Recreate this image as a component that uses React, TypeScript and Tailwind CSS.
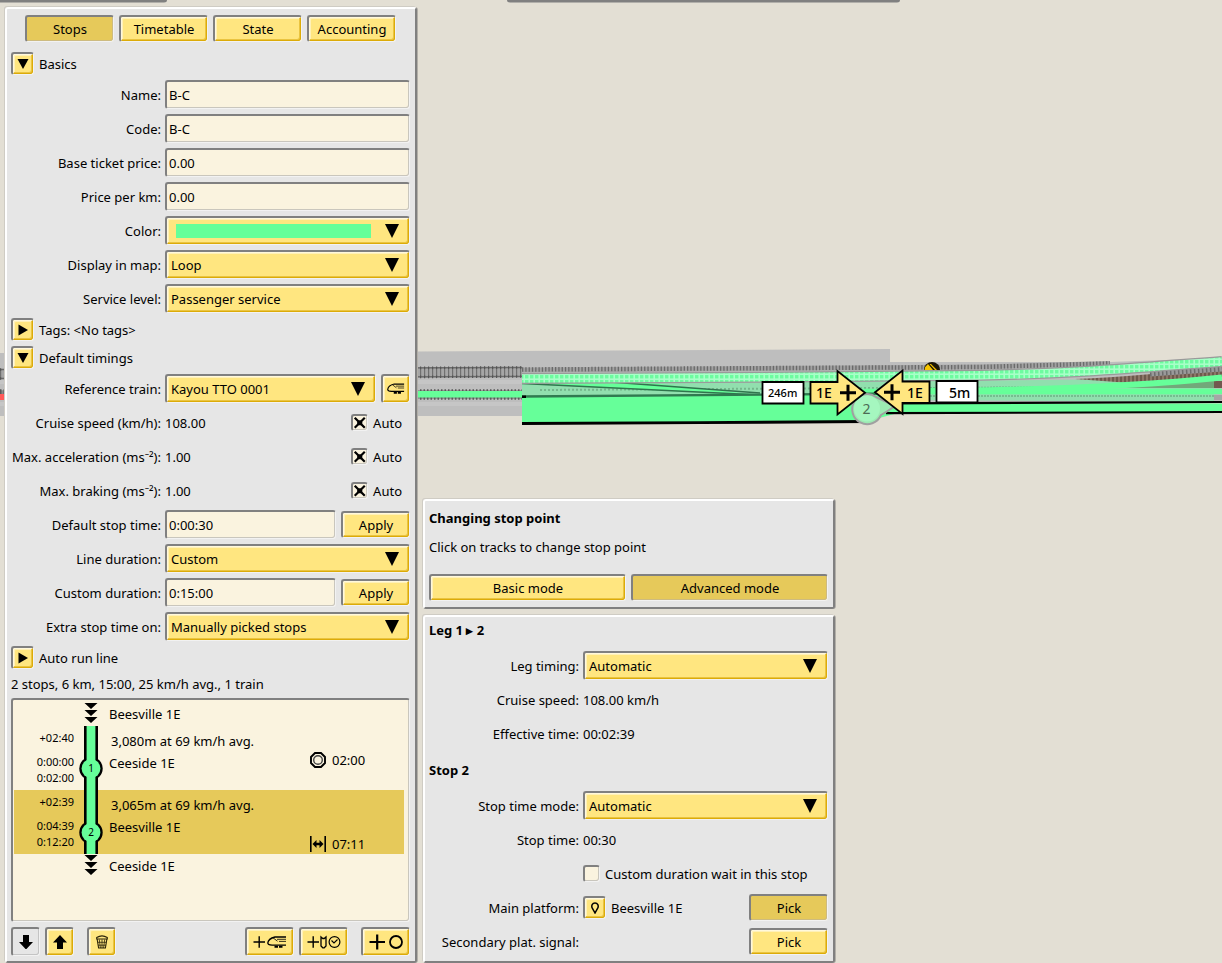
import type { ReactNode } from "react";
import { clsx } from "clsx";

const bevel =
  "rounded-[3px] border-t-2 border-l-2 border-r border-b border-t-[#808080] border-l-[#808080] border-r-[#f2f2f2] border-b-[#f2f2f2]";
const raised =
  "bg-[#ffe680] shadow-[inset_-1px_-1px_0_#dcab08,inset_1px_1px_0_#fff8dc,inset_-2px_-2px_0_#eac440,inset_2px_2px_0_#fff1b8]";
const pressed = "bg-[#e6c95a] shadow-[inset_-1px_-1px_0_#cdbb80]";
const field = "bg-[#faf3df] shadow-[inset_-1px_-1px_0_#c9c6bd]";
const panel =
  "rounded-[3px] border-2 border-t-white border-l-white border-r-[#808080] border-b-[#808080] bg-[#e6e6e6] px-1 pt-1 pr-[5px] pb-[5px] shadow-[-1px_-1px_0_#cfccc4,1px_0_0_#b2afa8]";

function Button({
  children,
  className,
  active,
  disabled,
  label,
}: {
  children: ReactNode;
  className?: string;
  active?: boolean;
  disabled?: boolean;
  label?: string;
}) {
  return (
    <button
      type="button"
      aria-label={label}
      aria-pressed={active}
      disabled={disabled}
      className={clsx(
        "flex shrink-0 items-center justify-center",
        bevel,
        disabled ? "bg-[#e6e6e6] shadow-[inset_-1px_-1px_0_#c4c4c4]" : active ? pressed : raised,
        className,
      )}
    >
      {children}
    </button>
  );
}

function DownArrow() {
  return (
    <svg viewBox="0 0 14 14" className="pointer-events-none h-3.5 w-3.5" aria-hidden="true">
      <path d="M0 0H14L7 14Z" />
    </svg>
  );
}

function Row({ id, label, children }: { id?: string; label?: string; children: ReactNode }) {
  return (
    <div className="grid min-h-[29px] grid-cols-[150px_1fr] items-center gap-1">
      {label && id ? (
        <label htmlFor={id} className="pt-0.5 text-right whitespace-nowrap">
          {label}
        </label>
      ) : (
        <span className="pt-0.5 text-right whitespace-nowrap">{label}</span>
      )}
      <div className="flex min-w-0 items-center gap-[5px]">{children}</div>
    </div>
  );
}

function Value({ children }: { children: ReactNode }) {
  return <span className="flex-1 pt-0.5">{children}</span>;
}

function Select({ id, value }: { id: string; value: string }) {
  return (
    <div className="relative min-w-0 flex-1">
      <select id={id} className={clsx("block h-[29px] w-full appearance-none pr-8 pl-1", bevel, raised)}>
        <option>{value}</option>
      </select>
      <div className="pointer-events-none absolute inset-y-0 right-[11px] flex items-center">
        <DownArrow />
      </div>
    </div>
  );
}

function TextField({ id, value }: { id: string; value: string }) {
  return (
    <input id={id} type="text" defaultValue={value} className={clsx("h-[29px] min-w-0 flex-1 pl-0.5", bevel, field)} />
  );
}

function CheckBox({ id, label, checked }: { id: string; label: string; checked?: boolean }) {
  return (
    <div className="flex items-center gap-[5px]">
      <div className="relative h-[17px] w-[17px]">
        <input
          id={id}
          type="checkbox"
          defaultChecked={checked}
          className={clsx("peer block h-[17px] w-[17px] appearance-none", bevel, field)}
        />
        <svg
          viewBox="0 0 17 17"
          className="pointer-events-none absolute inset-0 hidden peer-checked:block"
          aria-hidden="true"
        >
          <path d="M4.5 4.5L13 13M13 4.5L4.5 13" stroke="#000" strokeWidth="2.2" strokeLinecap="square" />
          <circle cx="8.75" cy="8.75" r="2.6" />
        </svg>
      </div>
      <label htmlFor={id} className="pt-0.5">
        {label}
      </label>
    </div>
  );
}

function Section({ title, open }: { title: string; open?: boolean }) {
  return (
    <div className="flex items-center gap-[5px]">
      <Button label={title} className="h-[23px] w-[23px]">
        <svg viewBox="0 0 12 12" className="h-3 w-3" aria-hidden="true">
          <path d={open ? "M0.5 1H11.5L6 11Z" : "M1.5 0.5V11.5L11 6Z"} />
        </svg>
      </Button>
      <h2 className="pt-0.5">{title}</h2>
    </div>
  );
}

function TrainShape() {
  return (
    <g fill="none" stroke="#000">
      <path d="M19 1H8C4 2 1 4.5 0.8 7C0.8 8.6 2.5 9 5 9.2H19" strokeWidth="1.3" />
      <path d="M6 1.8L10.5 5.2M10 3.3H19M12 5.4H19" strokeWidth="0.8" />
      <path d="M7.5 10.8H16.5" strokeWidth="2" strokeDasharray="3.5 1" />
    </g>
  );
}

function Chevrons() {
  return (
    <svg viewBox="0 0 34 24" className="h-6 w-[34px]" aria-hidden="true">
      <path d="M10.5 1H23.5L17 7ZM10.5 8H23.5L17 14ZM10.5 15H23.5L17 21Z" />
    </svg>
  );
}

function Stop({
  n,
  times,
  leg,
  name,
  wait,
  icon,
  selected,
}: {
  n: number;
  times: string[];
  leg: string;
  name: string;
  wait: string;
  icon: ReactNode;
  selected?: boolean;
}) {
  return (
    <li className={clsx("grid h-16 grid-cols-[60px_35px_1fr_94px]", selected && "bg-[#e6c95a]")}>
      <div className="flex flex-col pt-1 text-right text-[11px] leading-4">
        <span className="mb-2">{times[0]}</span>
        <span>{times[1]}</span>
        <span>{times[2]}</span>
      </div>
      <svg viewBox="0 0 34 64" className="h-16 w-[34px]" aria-hidden="true">
        <path d="M10 0H24V64H10Z" />
        <circle cx="17" cy="42.5" r="11.7" />
        <path d="M12.6 0H21.4V64H12.6Z" fill="#66ff99" />
        <circle cx="17" cy="42.5" r="9.4" fill="#66ff99" />
        <text x="17" y="46" textAnchor="middle" fontSize="10">
          {n}
        </text>
      </svg>
      <div className="flex flex-col pt-1 leading-[22px]">
        <span className="pl-0.5">{leg}</span>
        <span>{name}</span>
      </div>
      <div className={clsx("flex items-center gap-1.5", selected ? "mt-11 h-5" : "mt-6 h-5")}>
        {icon}
        <span>{wait}</span>
      </div>
    </li>
  );
}

function RailMap() {
  return (
    <svg className="absolute inset-0 h-full w-full" aria-label="Track map">
      <defs>
        <pattern id="dots" width="5" height="5" patternUnits="userSpaceOnUse">
          <rect width="5" height="5" fill="#a8ffc8" />
          <rect width="3.4" height="3.4" fill="#6dfc9f" />
        </pattern>
        <pattern id="brown" width="4" height="12" patternUnits="userSpaceOnUse">
          <rect width="4" height="12" fill="#8d7768" />
          <rect width="2" height="12" fill="#6d594c" />
        </pattern>
      </defs>
      <path d="M0 -6H167V0Q167 2.5 164 2.5H0Z" fill="#808080" />
      <path d="M507 -6H900V0Q900 2.5 897 2.5H510Q507 2.5 507 0Z" fill="#808080" />

      <path d="M0 353L418 351.5L890 349V362L1110 362L1222 358V402L522 410V416H0Z" fill="#bebebe" />
      <path d="M0 382H522M0 404H522" stroke="#c6c6c6" strokeWidth="4" fill="none" />

      <path d="M0 374L522 372" stroke="#a6a6a6" strokeWidth="9" fill="none" />
      <path d="M0 374L522 372" stroke="#707070" strokeWidth="9" strokeDasharray="1.2 2.8" fill="none" />
      <path d="M0 369.5L522 367.5M0 378.5L522 376.5" stroke="#6a6a6a" strokeWidth="1.5" fill="none" />
      <path d="M0 369.5L522 367.5M0 378.5L522 376.5" stroke="#555" strokeWidth="2.6" strokeDasharray="1.2 2.8" fill="none" />
      <path d="M522 370L980 367L1110 363.5" stroke="#a2a2a2" strokeWidth="5" fill="none" />
      <path d="M522 369.5L980 367L1110 363.5" stroke="#6a6a6a" strokeWidth="4.5" strokeDasharray="1.3 2" fill="none" />

      <path d="M0 394.5H522" stroke="#8a8a8a" strokeWidth="8.6" fill="none" />
      <path d="M0 394.5H522" stroke="#5a5a5a" strokeWidth="10.5" strokeDasharray="1.5 2" fill="none" />
      <path d="M418 394.2H522" stroke="#66ff99" strokeWidth="6.4" fill="none" />
      <path d="M0 397H6" stroke="#ff5a5a" strokeWidth="6" fill="none" />

      <path d="M522 384L1040 380L1214 378V402L522 398Z" fill="#91dfae" />
      <path d="M540 390L880 388" stroke="#74b78c" strokeWidth="2" strokeDasharray="2 2" fill="none" />
      <path d="M900 388L1214 386M900 396H1214" stroke="#6fb187" strokeWidth="1.6" strokeDasharray="2 1" fill="none" />
      <path d="M1075 379C1120 377 1170 373 1222 367V378L1130 383Z" fill="url(#brown)" />
      <path d="M1150 374L1222 369" stroke="#9a9a9a" strokeWidth="5" fill="none" />
      <path d="M1150 374L1222 369" stroke="#6c6c6c" strokeWidth="5" strokeDasharray="1.5 2.5" fill="none" />
      <path d="M1214 381H1222V388H1214Z" fill="#72594f" />
      <path d="M1214 395H1222V400H1214Z" fill="#a6a6a6" />
      <path d="M1150 385L1214 380V388H1120Z" fill="#72a87a" />

      <path d="M525 383L640 382L760 395H740Z" fill="#66ff99" />
      <path d="M522 383.5L760 395" stroke="#30744d" strokeWidth="1.4" fill="none" />
      <path d="M610 382L760 393" stroke="#30744d" strokeWidth="1.6" fill="none" />
      <path d="M860 391.5H1222" stroke="#66ff99" strokeWidth="5.5" fill="none" />
      <path d="M900 391C1020 391 1120 388 1222 377.5" stroke="#66ff99" strokeWidth="6" fill="none" />

      <path
        d="M522 378.5L760 377.2L980 375.2C1080 373.5 1140 367.5 1222 361.5"
        stroke="#9a9a9a"
        strokeWidth="11"
        fill="none"
      />
      <path
        d="M522 378.5L760 377.2L980 375.2C1080 373.5 1140 367.5 1222 361.5"
        stroke="url(#dots)"
        strokeWidth="8.6"
        fill="none"
      />

      <path d="M522 396.5L900 394V412.5L866 421.5L522 423.5Z" fill="#66ff99" />
      <path d="M522 396.5L900 393.5" stroke="#307a50" strokeWidth="2.4" fill="none" />
      <path d="M522 395.5H526V398H522Z" />
      <path d="M522 423.5L700 422.7L868 421.5" stroke="#000" strokeWidth="2.8" fill="none" />
      <path d="M868 403.5H1222V412.5L868 413.5Z" fill="#66ff99" />
      <path d="M890 403.3L1222 402" stroke="#000" strokeWidth="2.2" fill="none" />
      <path d="M886 413.2L1222 412" stroke="#000" strokeWidth="2.2" fill="none" />

      <path d="M924 370A8 8 0 0 1 940 370Z" fill="#1c1608" />
      <path d="M924.5 370Q925 366 928 364L933 370ZM931 364L937 370H935L929.5 364Z" fill="#f6c400" />

      <path
        d="M876 397L895 406Q888 411 881 415A15 15 0 1 1 876 397Z"
        fill="#9ceab2"
        stroke="#a0a0a0"
        strokeWidth="2"
      />
      <circle cx="867" cy="408.5" r="13" fill="#a5f7bf" />
      <text x="866.5" y="414" textAnchor="middle" fontSize="14" fill="#4c6b55">
        2
      </text>

      <g fill="#ffe680" stroke="#000" strokeWidth="1.8">
        <path d="M810.5 382H837.5V371L865 392.8L837.5 414.5V403.5H810.5Z" />
        <path d="M929.5 381.5H902.5V370.5L875 392.3L902.5 414V403H929.5Z" />
      </g>
      <path d="M840 392.8H856M848 384.8V400.8M884 392.3H900M892 384.3V400.3" stroke="#000" strokeWidth="3" />
      <path d="M762.5 382H803.5V403.5H762.5Z" fill="#fff" stroke="#000" strokeWidth="1.8" />
      <path d="M936.5 381H977.5V402.5H936.5Z" fill="#fff" stroke="#000" strokeWidth="1.8" />
      <g fontSize="14" fontWeight="500">
        <text x="816" y="398">1E</text>
        <text x="907" y="398">1E</text>
        <text x="949" y="398">5m</text>
      </g>
      <text x="768" y="397" fontSize="11" fontWeight="500">
        246m
      </text>
    </svg>
  );
}

function LinePanel() {
  return (
    <section className={clsx("flex w-[412px] shrink-0 flex-col gap-[5px]", panel)} aria-label="Line">
      <nav className="mt-0.5 mb-[5px] flex justify-center gap-[5px]">
        <Button active className="h-[27px] w-[89px]">
          Stops
        </Button>
        <Button className="h-[27px] w-[89px]">Timetable</Button>
        <Button className="h-[27px] w-[89px]">State</Button>
        <Button className="h-[27px] w-[89px]">Accounting</Button>
      </nav>

      <Section title="Basics" open />
      <Row id="name" label="Name:">
        <TextField id="name" value="B-C" />
      </Row>
      <Row id="code" label="Code:">
        <TextField id="code" value="B-C" />
      </Row>
      <Row id="base" label="Base ticket price:">
        <TextField id="base" value="0.00" />
      </Row>
      <Row id="perkm" label="Price per km:">
        <TextField id="perkm" value="0.00" />
      </Row>
      <Row id="color" label="Color:">
        <button
          id="color"
          type="button"
          className={clsx("flex h-[29px] flex-1 items-center justify-between gap-3.5 pr-2.5 pl-[9px]", bevel, raised)}
        >
          <span className="h-3.5 flex-1 bg-[#66ff99]" />
          <DownArrow />
        </button>
      </Row>
      <Row id="display" label="Display in map:">
        <Select id="display" value="Loop" />
      </Row>
      <Row id="service" label="Service level:">
        <Select id="service" value="Passenger service" />
      </Row>

      <Section title="Tags: <No tags>" />
      <Section title="Default timings" open />
      <Row id="train" label="Reference train:">
        <Select id="train" value="Kayou TTO 0001" />
        <Button label="Open train" className="h-[29px] w-[29px]">
          <svg viewBox="0 0 20 13" className="h-3 w-[18px]" aria-hidden="true">
            <TrainShape />
          </svg>
        </Button>
      </Row>
      <Row label="Cruise speed (km/h):">
        <Value>108.00</Value>
        <div className="pr-2">
          <CheckBox id="auto-speed" label="Auto" checked />
        </div>
      </Row>
      <Row label="Max. acceleration (ms⁻²):">
        <Value>1.00</Value>
        <div className="pr-2">
          <CheckBox id="auto-accel" label="Auto" checked />
        </div>
      </Row>
      <Row label="Max. braking (ms⁻²):">
        <Value>1.00</Value>
        <div className="pr-2">
          <CheckBox id="auto-brake" label="Auto" checked />
        </div>
      </Row>
      <Row id="stoptime" label="Default stop time:">
        <TextField id="stoptime" value="0:00:30" />
        <Button className="h-[27px] w-[69px]">Apply</Button>
      </Row>
      <Row id="duration" label="Line duration:">
        <Select id="duration" value="Custom" />
      </Row>
      <Row id="custom" label="Custom duration:">
        <TextField id="custom" value="0:15:00" />
        <Button className="h-[27px] w-[69px]">Apply</Button>
      </Row>
      <Row id="extra" label="Extra stop time on:">
        <Select id="extra" value="Manually picked stops" />
      </Row>

      <Section title="Auto run line" />
      <p className="h-[19px] leading-[21px]">2 stops, 6 km, 15:00, 25 km/h avg., 1 train</p>

      <ul className={clsx("min-h-[224px] flex-1 pt-0.5 pr-[5px] pl-px", bevel, field)}>
        <li className="flex h-6 items-center gap-px pl-[60px]">
          <Chevrons />
          Beesville 1E
        </li>
        <Stop
          n={1}
          times={["+02:40", "0:00:00", "0:02:00"]}
          leg="3,080m at 69 km/h avg."
          name="Ceeside 1E"
          wait="02:00"
          icon={
            <svg viewBox="0 0 16 16" className="h-4 w-4" fill="none" stroke="#000" aria-hidden="true">
              <path d="M5 1H11L15 5V11L11 15H5L1 11V5Z" strokeWidth="1.9" />
              <circle cx="8" cy="8" r="4.3" stroke="#444" strokeWidth="1.4" />
            </svg>
          }
        />
        <Stop
          n={2}
          selected
          times={["+02:39", "0:04:39", "0:12:20"]}
          leg="3,065m at 69 km/h avg."
          name="Beesville 1E"
          wait="07:11"
          icon={
            <svg viewBox="0 0 16 16" className="h-4 w-4" aria-hidden="true">
              <path d="M0 0H1.6V16H0ZM14.4 0H16V16H14.4ZM2.5 8L6.5 4V6.8H9.5V4L13.5 8L9.5 12V9.2H6.5V12Z" />
            </svg>
          }
        />
        <li className="flex h-6 items-center gap-px pl-[60px]">
          <Chevrons />
          Ceeside 1E
        </li>
      </ul>

      <div className="flex gap-[5px]">
        <Button label="Move down" disabled className="h-[29px] w-[29px]">
          <svg viewBox="0 0 14 14" className="h-3.5 w-3.5" aria-hidden="true">
            <path d="M4 0H10V7H14L7 14.5L0 7H4Z" fill="#000" />
          </svg>
        </Button>
        <Button label="Move up" className="h-[29px] w-[29px]">
          <svg viewBox="0 0 14 14" className="h-3.5 w-3.5" aria-hidden="true">
            <path d="M4 14.5H10V7.5H14L7 0L0 7.5H4Z" fill="#000" />
          </svg>
        </Button>
        <Button label="Delete" className="ml-2 h-[29px] w-[29px]">
          <svg viewBox="0 0 12 14" className="h-3.5 w-3" fill="none" stroke="#2a2208" aria-hidden="true">
            <path d="M0.7 2.5Q6 -0.8 11.3 2.5V4H0.7ZM1.2 4.5L2.6 13H9.4L10.8 4.5" strokeWidth="1.1" />
            <path d="M3.3 4.5L4.4 13M6 4.5V13M8.7 4.5L7.6 13M1.8 7.3H10.2M2.2 10.2H9.8" strokeWidth="0.8" />
          </svg>
        </Button>
        <Button label="Add train" className="ml-auto h-[29px] w-[49px]">
          <svg viewBox="0 0 34 14" className="h-3.5 w-[34px]" aria-hidden="true">
            <path d="M0.5 7H12M6.2 1.2V12.8" stroke="#000" strokeWidth="1.4" />
            <g transform="translate(14 1)">
              <TrainShape />
            </g>
          </svg>
        </Button>
        <Button label="Add signal wait" className="h-[29px] w-[49px]">
          <svg viewBox="0 0 34 14" className="h-3.5 w-[34px]" fill="none" stroke="#000" aria-hidden="true">
            <path d="M0.5 7H12M6.2 1.2V12.8" strokeWidth="1.4" />
            <path d="M14 2L15.8 3.5H17.2L19 2V11L17.2 12.8H15.8L14 11Z" strokeWidth="1.3" />
            <circle cx="27.5" cy="7" r="5.4" strokeWidth="1.2" />
            <path d="M24.5 5.5L27 8L30.5 4.5" strokeWidth="1.1" />
          </svg>
        </Button>
        <Button label="Add stop" className="ml-2 h-[29px] w-[49px]">
          <svg viewBox="0 0 34 16" className="h-4 w-[34px]" fill="none" stroke="#000" aria-hidden="true">
            <path d="M0.5 8H16M8.2 0.5V15.5" strokeWidth="2.2" />
            <circle cx="27" cy="8" r="6" strokeWidth="1.8" />
          </svg>
        </Button>
      </div>
    </section>
  );
}

function StopPointPanel() {
  return (
    <section className={clsx("flex flex-col gap-[5px]", panel)}>
      <h2 className="h-[27px] leading-[27px] font-bold">Changing stop point</h2>
      <p className="mb-3 h-5 leading-5">Click on tracks to change stop point</p>
      <div className="mb-px grid grid-cols-2 gap-[5px]">
        <Button className="h-[27px]">Basic mode</Button>
        <Button active className="h-[27px]">
          Advanced mode
        </Button>
      </div>
    </section>
  );
}

function LegPanel() {
  return (
    <section className={clsx("flex flex-col gap-[5px]", panel)}>
      <h2 className="mb-1.5 h-[19px] font-bold">Leg 1 ▸ 2</h2>
      <Row id="leg-timing" label="Leg timing:">
        <Select id="leg-timing" value="Automatic" />
      </Row>
      <Row label="Cruise speed:">
        <Value>108.00 km/h</Value>
      </Row>
      <Row label="Effective time:">
        <Value>00:02:39</Value>
      </Row>
      <h2 className="my-[7px] h-[19px] leading-[21px] font-bold">Stop 2</h2>
      <Row id="stop-mode" label="Stop time mode:">
        <Select id="stop-mode" value="Automatic" />
      </Row>
      <Row label="Stop time:">
        <Value>00:30</Value>
      </Row>
      <Row>
        <CheckBox id="custom-wait" label="Custom duration wait in this stop" />
      </Row>
      <Row label="Main platform:">
        <Button label="Show platform" className="h-[23px] w-[23px]">
          <svg viewBox="0 0 8 12" className="h-3 w-2" fill="none" stroke="#000" strokeWidth="1.5" aria-hidden="true">
            <path d="M4 11L1.3 6.2C0 3.6 1.4 1 4 1S8 3.6 6.7 6.2Z" />
          </svg>
        </Button>
        <Value>Beesville 1E</Value>
        <Button active className="h-[27px] w-[79px]">
          Pick
        </Button>
      </Row>
      <Row label="Secondary plat. signal:">
        <Button className="ml-auto h-[27px] w-[79px]">Pick</Button>
      </Row>
    </section>
  );
}

export default function App() {
  return (
    <div className="relative flex min-h-screen bg-[#e3dfd4] pt-[7px] pl-[5px] font-['Noto_Sans',sans-serif] text-[13px] leading-[19px] text-black">
      <RailMap />
      <main className="relative flex gap-1.5">
        <LinePanel />
        <div className="flex w-[412px] flex-col justify-end gap-1.5">
          <StopPointPanel />
          <LegPanel />
        </div>
      </main>
    </div>
  );
}
